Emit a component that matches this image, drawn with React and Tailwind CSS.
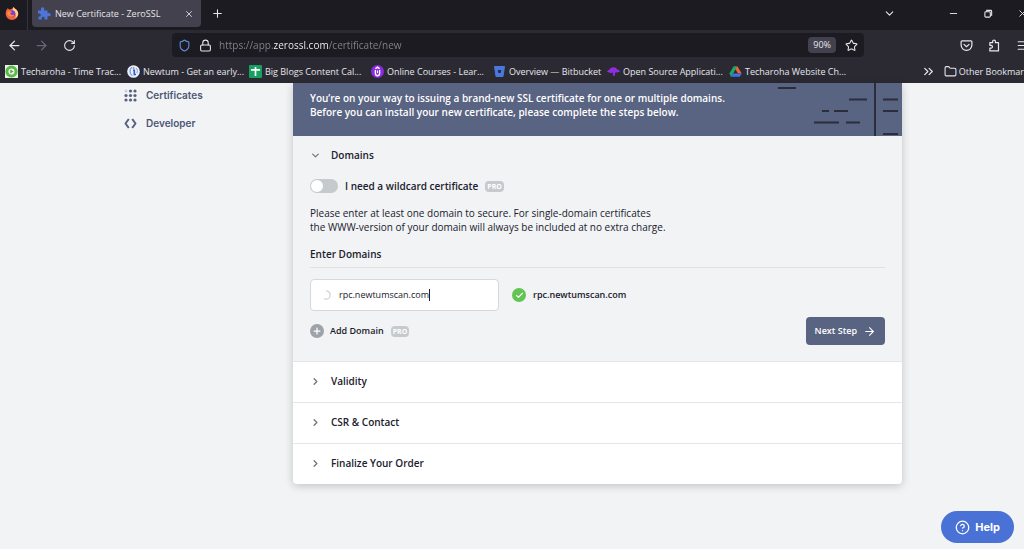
import React, { useState } from 'react';
import {
    ArrowLeft,
    ArrowRight,
    Check,
    ChevronDown,
    ChevronRight,
    ChevronsRight,
    CircleQuestionMark,
    Folder,
    Lock,
    Menu,
    Minus,
    Plus,
    RotateCw,
    Shield,
    Star,
    X,
} from 'lucide-react';

const FirefoxIcon = () => (
    <svg viewBox="0 0 16 16" className="size-[14px]">
        <path d="M3 2.5c.6.8 1.4 1.2 2.4 1.4L8 3.2 10 1c.3 1.2 1 1.8 2.2 2.5C14 4.700 15.200 6.500 15.200 9A7.200 7 0 0 1 .8 9c0-2.600.8-4.600 2.200-6.500Z" fill="#f0643c" />
        <path d="M10 .8c.2 1.400 1.200 2 2.400 3 1.700 1.500 2.800 3.300 2.600 5.700-.8 2.600-2 3.800-3.500 4.400C13.500 10 12 6 8.800 4.500 8.800 3 9.200 1.800 10 .8Z" fill="#f9d48a" />
        <circle cx="8" cy="8.600" r="3.600" fill="#7a3fe0" />
        <path d="M2.500 6.500C4 5.400 6 5.500 8 7c-1 .2-1.800.6-2 1.600.8 1.800 2.800 2.200 4.800 1.200-1 2.600-4.300 3.200-6.300 1.700C3 10.300 2.300 8.500 2.500 6.500Z" fill="#ff8a3a" />
    </svg>
);

const PuzzleIcon = () => (
    <svg viewBox="0 0 14 14" className="size-[14px] shrink-0" fill="#4c74d9">
        <path d="M4 3.500V2a1.600 1.600 0 0 1 3.200-.4v1.900H10.500V6h1.700a1.600 1.600 0 0 1 0 3.200h-1.700v3.300H7.600v-1.300a1.400 1.400 0 0 0-2.800 0v1.300H1.500V9.600h.8a1.500 1.500 0 0 0 0-3H1V3.500Z" />
    </svg>
);

const ExtensionIcon = () => (
    <svg viewBox="0 0 14 14" className="size-[13px]" fill="none" stroke="currentColor" strokeWidth="1.300" strokeLinejoin="round">
        <path d="M5 4V2.600a1.500 1.500 0 0 1 3 0V4h3.300v8.800H2V9.800h1.300a1.500 1.500 0 0 0 0-3H2V4Z" />
    </svg>
);

const PocketIcon = () => (
    <svg viewBox="0 0 14 14" className="size-[13px]" fill="none" stroke="currentColor" strokeWidth="1.300" strokeLinecap="round" strokeLinejoin="round">
        <path d="M2.200 2h9.600a1 1 0 0 1 1 1v3.500a5.800 5.800 0 0 1-11.600 0V3a1 1 0 0 1 1-1Z" />
        <path d="M4.300 5.800 7 8.300l2.700-2.500" />
    </svg>
);

const RestoreIcon = () => (
    <svg viewBox="0 0 10 10" className="size-[9px]" fill="none" stroke="currentColor" strokeWidth="1.200">
        <rect x="1" y="3" width="6" height="6" rx="1" />
        <path d="M3 3V1.500h4.500a1 1 0 0 1 1 1V7H7" />
    </svg>
);

const TecharohaIcon = () => (
    <svg viewBox="0 0 13 13" className="size-[13px] shrink-0">
        <rect width="13" height="13" fill="#e9f3e6" />
        <circle cx="6.500" cy="6.500" r="4.600" fill="#e9f3e6" stroke="#5cb848" strokeWidth="3" />
        <path d="m5.300 4.400 3.200 2.100-3.200 2.100Z" fill="#4ea83c" />
    </svg>
);

const NewtumIcon = () => (
    <svg viewBox="0 0 13 13" className="size-[13px] shrink-0">
        <circle cx="6.500" cy="6.500" r="6.300" fill="#e8eefa" />
        <path d="M5 2.200C2.200 4 2.500 9 5.300 10.800" fill="none" stroke="#6fa2e8" strokeWidth="1.300" />
        <path d="M6 5.200h1.300v4.300H9" fill="none" stroke="#2c62c4" strokeWidth="1.600" />
        <circle cx="6.700" cy="3" r="1" fill="#ec7a3c" />
        <path d="M9 3c1.500 1.500 1.700 3.500.8 5.200" fill="none" stroke="#6fa2e8" strokeWidth="1" />
    </svg>
);

const SheetIcon = () => (
    <svg viewBox="0 0 13 13" className="size-[13px] shrink-0">
        <rect width="13" height="13" rx="1" fill="#18a05e" />
        <path d="M2 4.800h9M6.500 2v9" stroke="#fff" strokeWidth="1.700" />
    </svg>
);

const CoursesIcon = () => (
    <svg viewBox="0 0 13 13" className="size-[13px] shrink-0">
        <circle cx="6.500" cy="6.500" r="6.500" fill="#8a2be0" />
        <path d="M4.400 5v3.600a2.100 2.100 0 0 0 4.200 0V5M4.400 3.800l2.100-1.600 2.100 1.600" fill="none" stroke="#fff" strokeWidth="1.400" />
        <path d="M6.500 5.500v2.500" stroke="#fff" strokeWidth="1" />
    </svg>
);

const BitbucketIcon = () => (
    <svg viewBox="0 0 13 13" className="size-[13px] shrink-0">
        <path d="M1.500 1.500h10L10 11.500H3Z" fill="#4a78dc" stroke="#4a78dc" strokeLinejoin="round" />
        <path d="M4.800 5h3.400l-.5 3H5.300Z" fill="#272a4c" />
    </svg>
);

const UmbrellaIcon = () => (
    <svg viewBox="0 0 13 13" className="size-[13px] shrink-0">
        <path d="M0 6.800C.6 5.300 2 5 2.600 4.600 3.300 3 5 2.200 6.600 2.200S9.800 3.300 10.300 4.600c1.200.1 2.300.8 2.700 2.200l-4 .7-1 .2v3H6V7.700l-2.300.2Z" fill="#8f2ee0" />
    </svg>
);

const DriveIcon = () => (
    <svg viewBox="0 0 13 13" className="size-[13px] shrink-0">
        <path d="M4.600 1.200h3.800L4 8.700l-2.200 3L.500 8.300Z" fill="#1fa463" />
        <path d="M8.400 1.200 12.700 8.600H9L6.300 4Z" fill="#f0623a" />
        <path d="M4 8.400h8.700l-1.900 3.300h-9Z" fill="#3f74e6" />
    </svg>
);

const BOOKMARKS = [
    { label: 'Techaroha - Time Trac...', icon: TecharohaIcon, width: 'w-[122px]' },
    { label: 'Newtum - Get an early...', icon: NewtumIcon, width: 'w-[122px]' },
    { label: 'Big Blogs Content Cal...', icon: SheetIcon, width: 'w-[122px]' },
    { label: 'Online Courses - Lear...', icon: CoursesIcon, width: 'w-[122px]' },
    { label: 'Overview — Bitbucket', icon: BitbucketIcon, width: 'w-[114px]' },
    { label: 'Open Source Applicati...', icon: UmbrellaIcon, width: 'w-[122px]' },
    { label: 'Techaroha Website Ch...', icon: DriveIcon, width: 'w-[122px]' },
];

const TabStrip = () => (
    <div className="flex h-[30px] items-center bg-[#1c1b22]">
        <button aria-label="Firefox View" className="flex h-full w-7 shrink-0 items-center justify-center border-r border-[#35343d] pr-1 pb-1">
            <FirefoxIcon />
        </button>
        <div className="ml-1 flex h-[27px] w-[169px] shrink-0 items-center gap-1 self-start rounded-b bg-[#42414d] px-[5px]">
            <PuzzleIcon />
            <span className="flex-1 whitespace-nowrap">New Certificate - ZeroSSL</span>
            <button aria-label="Close tab" className="p-[2px]">
                <X size={10} strokeWidth={2} />
            </button>
        </div>
        <button aria-label="New tab" className="ml-[10px] pb-1">
            <Plus size={13} strokeWidth={2} />
        </button>
        <div className="-mr-1 ml-auto flex shrink-0 items-center pb-1">
            <button aria-label="List all tabs" className="mr-[52px]">
                <ChevronDown size={13} strokeWidth={2} />
            </button>
            <button aria-label="Minimize" className="mr-[25px]">
                <Minus size={11} strokeWidth={2} />
            </button>
            <button aria-label="Restore" className="mr-6">
                <RestoreIcon />
            </button>
            <button aria-label="Close window">
                <X size={11} strokeWidth={2} />
            </button>
        </div>
    </div>
);

const Toolbar = () => (
    <div className="flex h-[30px] items-center bg-[#2b2a33]">
        <button aria-label="Back" className="ml-[7px]">
            <ArrowLeft size={15} strokeWidth={2} />
        </button>
        <button aria-label="Forward" className="ml-3 text-[#686773]" disabled>
            <ArrowRight size={15} strokeWidth={2} />
        </button>
        <button aria-label="Reload" className="ml-[14px]">
            <RotateCw size={13} strokeWidth={2} />
        </button>
        <div className="ml-24 flex h-6 min-w-0 flex-1 items-center rounded bg-[#1c1b22] px-[6px]">
            <Shield size={13} strokeWidth={2} className="shrink-0 text-[#5f8fdc]" />
            <Lock size={13} strokeWidth={2} className="ml-2 shrink-0" />
            {/* The host part of the address is brighter than the rest */}
            <input
                aria-label="Address"
                defaultValue="https://app.zerossl.com/certificate/new"
                className="ml-[7px] min-w-0 flex-1 bg-[linear-gradient(90deg,#85848e_55px,#fbfbfe_55px,#fbfbfe_110px,#85848e_110px)] bg-clip-text text-[10px] text-transparent outline-none"
            />
            <button className="mr-[9px] rounded-sm bg-[#42414d] px-[5px] py-px text-[9px] leading-[14px]">90%</button>
            <button aria-label="Bookmark this page">
                <Star size={13} strokeWidth={2} />
            </button>
        </div>
        <div className="-mr-[5px] ml-24 flex shrink-0 items-center gap-[15px]">
            <button aria-label="Save to Pocket">
                <PocketIcon />
            </button>
            <button aria-label="Extensions">
                <ExtensionIcon />
            </button>
            <button aria-label="Menu">
                <Menu size={13} strokeWidth={2} />
            </button>
        </div>
    </div>
);

const BookmarkBar = () => (
    <nav aria-label="Bookmarks" className="flex h-[23px] items-center bg-[#2b2a33] pl-[5px] whitespace-nowrap">
        {BOOKMARKS.map(({ label, icon: Icon, width }) => (
            <a key={label} href="#" className={`flex shrink-0 items-center gap-[3px] ${width}`}>
                <Icon />
                {label}
            </a>
        ))}
        <div className="ml-auto flex shrink-0 items-center gap-2">
            <button aria-label="More bookmarks">
                <ChevronsRight size={15} strokeWidth={2} />
            </button>
            <button className="flex items-center gap-[2px]">
                <Folder size={13} strokeWidth={2} />
                Other Bookmar
            </button>
        </div>
    </nav>
);

const ProBadge = () => (
    <span className="rounded-sm bg-[#c5cacc] px-[2px] text-[7px] leading-[11px] font-bold text-white">PRO</span>
);

const GridIcon = () => (
    <svg viewBox="0 0 13 13" className="size-[13px]" fill="#56617f">
        <circle cx="2" cy="2" r="1.500" opacity=".25" />
        <circle cx="6.500" cy="2" r="1.600" />
        <circle cx="11" cy="2" r="1.600" />
        <circle cx="2" cy="6.500" r="1.600" />
        <circle cx="6.500" cy="6.500" r="1.600" />
        <circle cx="11" cy="6.500" r="1.600" />
        <circle cx="2" cy="11" r="1.600" />
        <circle cx="6.500" cy="11" r="1.600" />
        <circle cx="11" cy="11" r="1.600" />
    </svg>
);

const CodeIcon = () => (
    <svg viewBox="0 0 13 13" className="size-[13px]" fill="none" stroke="#56617f" strokeWidth="2" strokeLinejoin="round">
        <path d="M4.800 2 1.500 6.500 4.800 11M8.200 2l3.300 4.500L8.200 11" />
    </svg>
);

const Sidebar = () => (
    <aside className="w-[293px] shrink-0 pt-1 pl-[124px]">
        <nav className="flex flex-col gap-3 font-[Inter,sans-serif] text-[10px] leading-4 font-semibold text-[#4c5674]">
            <a href="#" className="flex items-center gap-[9px]">
                <GridIcon />
                Certificates
            </a>
            <a href="#" className="flex items-center gap-[9px]">
                <CodeIcon />
                Developer
            </a>
        </nav>
    </aside>
);

const BannerArt = () => (
    <svg viewBox="0 0 100 53" className="absolute top-0 right-0 h-[53px] w-[100px] overflow-visible" stroke="#2b2d3d" strokeWidth="2">
        <path d="M73 0v53" />
        <path d="M-24 5h18M47 16.500h18M20 28h7M32 28h14M12 39.500h25M44 39.500h14M81 16.500h15M81 28h15M81 51h15" />
    </svg>
);

const DomainsStep = () => {
    const [wildcard, setWildcard] = useState(false);
    const [domain, setDomain] = useState('rpc.newtumscan.com');

    return (
        <section className="bg-[#f1f3f5] px-[17px] pt-3 pb-4">
            <button className="flex items-center gap-[10px] font-semibold">
                <ChevronDown size={11} strokeWidth={3} className="text-[#77787c]" />
                Domains
            </button>

            <div className="mt-[17px] flex items-center gap-[7px]">
                <input
                    id="wildcard"
                    type="checkbox"
                    checked={wildcard}
                    onChange={(e) => setWildcard(e.target.checked)}
                    className="h-[14px] w-7 appearance-none rounded-full bg-[#c5cacc] p-px before:block before:size-3 before:rounded-full before:bg-white checked:before:translate-x-[14px]"
                />
                <label htmlFor="wildcard" className="font-semibold">
                    I need a wildcard certificate
                </label>
                <ProBadge />
            </div>

            <p className="mt-[13px]">
                Please enter at least one domain to secure. For single-domain certificates
                <br />
                the WWW-version of your domain will always be included at no extra charge.
            </p>

            <label htmlFor="domain" className="mt-[13px] block border-b border-[#dfe1e4] pb-[6px] font-semibold">
                Enter Domains
            </label>

            <div className="mt-[11px] flex items-center gap-[13px]">
                <div className="flex h-8 w-[189px] items-center rounded-sm border border-[#d5d8dc] bg-white px-[10px]">
                    <svg viewBox="0 0 10 10" className="mr-2 size-[10px]" fill="none" stroke="#d3d5d8" strokeWidth="1.300">
                        <path d="M5 .8a4.200 4.200 0 0 1 0 8.400H3" />
                    </svg>
                    <input
                        id="domain"
                        value={domain}
                        onChange={(e) => setDomain(e.target.value)}
                        className="field-sizing-content max-w-[150px] text-[9px] outline-none"
                    />
                    <span className="h-3 w-px bg-[#20202c]" />
                </div>
                <div className="flex items-center gap-[7px] text-[9px] font-semibold">
                    <span className="flex size-[14px] items-center justify-center rounded-full bg-[#62c453] text-white">
                        <Check size={9} strokeWidth={3} />
                    </span>
                    rpc.newtumscan.com
                </div>
            </div>

            <div className="mt-[6px] flex items-center justify-between text-[9px]">
                <div className="flex items-center gap-[7px]">
                    <button className="flex items-center gap-[6px] font-semibold">
                        <span className="flex size-[14px] items-center justify-center rounded-full bg-[#9ea3aa] text-white">
                            <Plus size={10} strokeWidth={3} />
                        </span>
                        Add Domain
                    </button>
                    <ProBadge />
                </div>
                <button className="flex h-7 items-center gap-[6px] rounded-sm bg-[#596382] px-[9px] font-semibold text-white">
                    Next Step
                    <ArrowRight size={13} strokeWidth={2} />
                </button>
            </div>
        </section>
    );
};

const App = () => {
    return (
        <div className="relative flex min-h-screen flex-col overflow-hidden bg-[#f1f3f5]">
            <header className="overflow-hidden font-['Open_Sans',sans-serif] text-[9px] leading-[14px] text-[#e6e6ec]">
                <TabStrip />
                <Toolbar />
                <BookmarkBar />
            </header>

            <div className="flex flex-1">
                <Sidebar />
                <main className="mr-[122px] min-w-0 flex-1 self-start overflow-hidden rounded-b-sm bg-white font-['Open_Sans',sans-serif] text-[10px] leading-[14px] text-[#20202c] shadow-[0_2px_8px_rgba(0,0,0,0.2)]">
                    <div className="relative h-[53px] bg-[#596382] px-[17px] pt-2 font-semibold text-white">
                        <BannerArt />
                        <p>
                            You’re on your way to issuing a brand-new SSL certificate for one or multiple domains.
                            <br />
                            Before you can install your new certificate, please complete the steps below.
                        </p>
                    </div>
                    <DomainsStep />
                    {['Validity', 'CSR & Contact', 'Finalize Your Order'].map((step) => (
                        <button
                            key={step}
                            className="flex h-[41px] w-full items-center gap-[10px] border-t border-[#e4e6e9] px-[17px] pb-[2px] font-semibold"
                        >
                            <ChevronRight size={11} strokeWidth={3} className="text-[#77787c]" />
                            {step}
                        </button>
                    ))}
                </main>
            </div>

            <button className="absolute right-[10px] bottom-[6px] flex h-8 items-center gap-[5px] rounded-full bg-[#4a72d6] px-[14px] font-[Inter,sans-serif] text-[11px] font-bold text-white">
                <CircleQuestionMark size={15} strokeWidth={2} />
                Help
            </button>
        </div>
    );
};

export default App;
